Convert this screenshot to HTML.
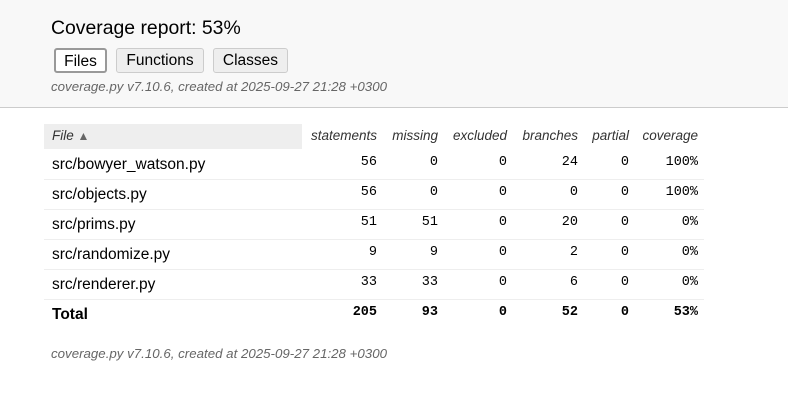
<!DOCTYPE html>
<html><head><style>
*{margin:0;padding:0;box-sizing:border-box}
body{width:788px;height:403px;background:#fff;font-family:"Liberation Sans",sans-serif;color:#000;position:relative;overflow:hidden}
#hdr{position:absolute;left:0;top:0;width:788px;height:108px;background:#f8f8f8;border-bottom:1px solid #ccc}
h1{position:absolute;left:51px;top:17px;font-size:19.4px;font-weight:normal}
.btn{position:absolute;top:48px;height:25px;border:1px solid #ccc;background:#eee;border-radius:3px;font-size:15.5px;line-height:23px;text-align:center}
.meta{position:absolute;font-style:italic;font-size:13.3px;color:#666}
.t{position:absolute;white-space:nowrap}
.hd{font-style:italic;font-size:13.5px;color:#333;top:128px}
.sep{position:absolute;left:44px;width:660px;height:1px;background:#eee}
.fn{left:52px;font-size:15.5px}
.n{font-family:"Liberation Mono",monospace;font-size:13.5px;text-align:right;width:60px}
</style></head><body>
<div id="hdr">
<h1>Coverage report: 53%</h1>
<div class="btn" style="left:54px;width:53px;background:#fff;border:2px solid #999;">Files</div>
<div class="btn" style="left:116px;width:88px">Functions</div>
<div class="btn" style="left:213px;width:75px">Classes</div>
<div class="meta" style="left:51px;top:79px">coverage.py v7.10.6, created at 2025-09-27 21:28 +0300</div>
</div>
<div style="position:absolute;left:44px;top:124px;width:258px;height:25px;background:#eee"></div>
<div class="t hd" style="left:52px">File <span style="font-style:normal;color:#666;font-size:12px">▲</span></div>
<div class="t hd" style="right:411px">statements</div>
<div class="t hd" style="right:350px">missing</div>
<div class="t hd" style="right:281px">excluded</div>
<div class="t hd" style="right:210px">branches</div>
<div class="t hd" style="right:159px">partial</div>
<div class="t hd" style="right:90px">coverage</div>
<div class="sep" style="top:179px"></div>
<div class="sep" style="top:209px"></div>
<div class="sep" style="top:239px"></div>
<div class="sep" style="top:269px"></div>
<div class="sep" style="top:299px"></div>
<div class="meta" style="left:51px;top:346px">coverage.py v7.10.6, created at 2025-09-27 21:28 +0300</div>

<div class="t fn" style="top:156px">src/bowyer_watson.py</div>
<div class="t fn" style="top:186px">src/objects.py</div>
<div class="t fn" style="top:216px">src/prims.py</div>
<div class="t fn" style="top:246px">src/randomize.py</div>
<div class="t fn" style="top:276px">src/renderer.py</div>
<div class="t fn" style="top:306px;font-weight:bold">Total</div>

<div class="t n" style="top:155px;left:317px">56</div><div class="t n" style="top:155px;left:378px">0</div><div class="t n" style="top:155px;left:447px">0</div><div class="t n" style="top:155px;left:518px">24</div><div class="t n" style="top:155px;left:569px">0</div><div class="t n" style="top:155px;left:638px">100%</div>
<div class="t n" style="top:185px;left:317px">56</div><div class="t n" style="top:185px;left:378px">0</div><div class="t n" style="top:185px;left:447px">0</div><div class="t n" style="top:185px;left:518px">0</div><div class="t n" style="top:185px;left:569px">0</div><div class="t n" style="top:185px;left:638px">100%</div>
<div class="t n" style="top:215px;left:317px">51</div><div class="t n" style="top:215px;left:378px">51</div><div class="t n" style="top:215px;left:447px">0</div><div class="t n" style="top:215px;left:518px">20</div><div class="t n" style="top:215px;left:569px">0</div><div class="t n" style="top:215px;left:638px">0%</div>
<div class="t n" style="top:245px;left:317px">9</div><div class="t n" style="top:245px;left:378px">9</div><div class="t n" style="top:245px;left:447px">0</div><div class="t n" style="top:245px;left:518px">2</div><div class="t n" style="top:245px;left:569px">0</div><div class="t n" style="top:245px;left:638px">0%</div>
<div class="t n" style="top:275px;left:317px">33</div><div class="t n" style="top:275px;left:378px">33</div><div class="t n" style="top:275px;left:447px">0</div><div class="t n" style="top:275px;left:518px">6</div><div class="t n" style="top:275px;left:569px">0</div><div class="t n" style="top:275px;left:638px">0%</div>
<div style="font-weight:bold">
<div class="t n" style="top:305px;left:317px">205</div><div class="t n" style="top:305px;left:378px">93</div><div class="t n" style="top:305px;left:447px">0</div><div class="t n" style="top:305px;left:518px">52</div><div class="t n" style="top:305px;left:569px">0</div><div class="t n" style="top:305px;left:638px">53%</div>
</div>
</body></html>
